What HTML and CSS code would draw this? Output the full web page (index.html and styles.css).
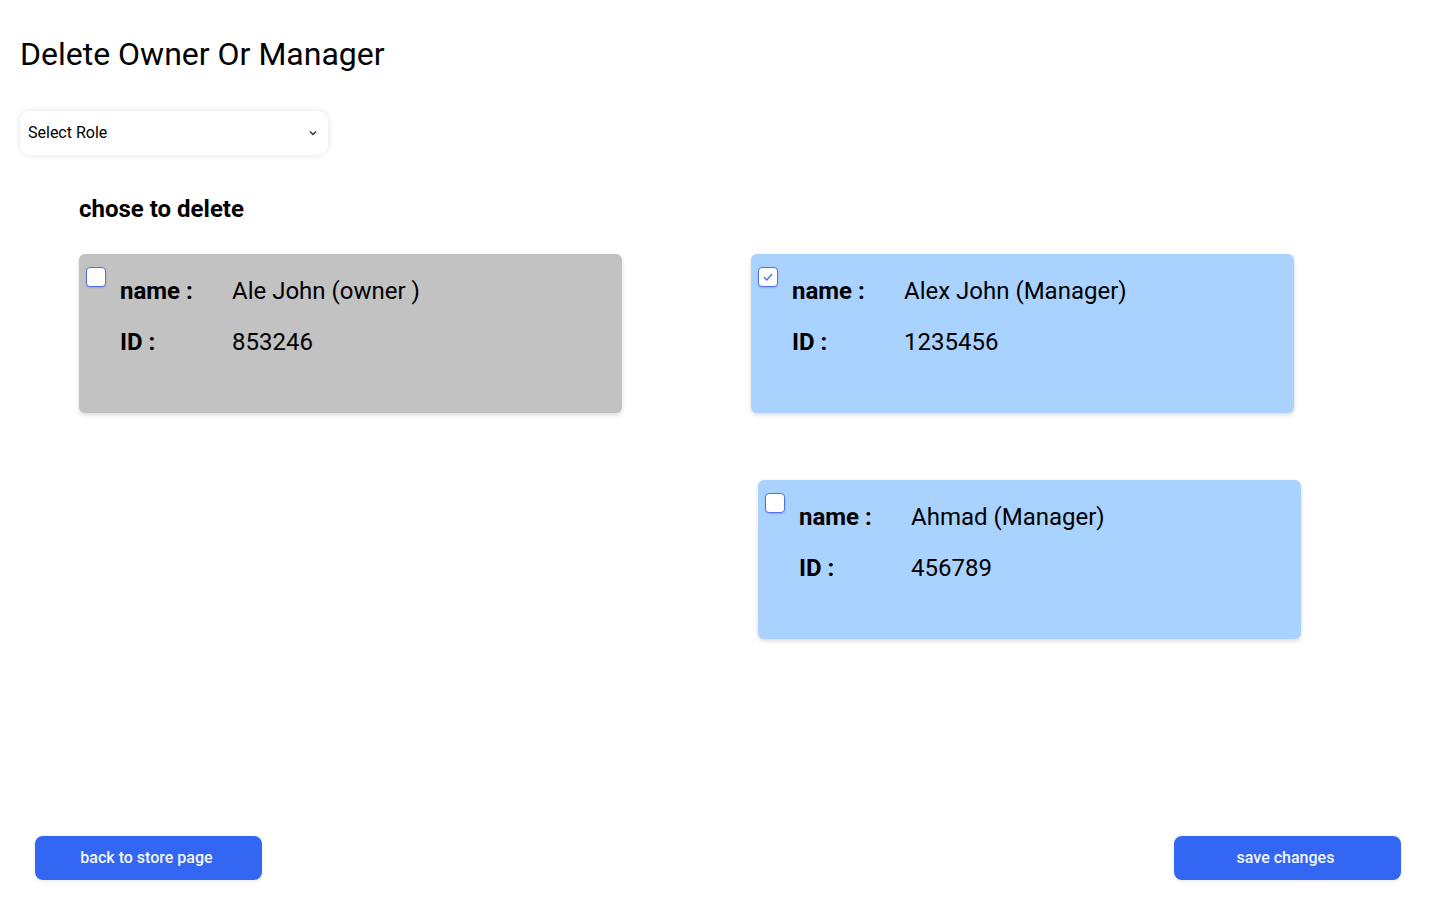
FILE: index.html
```html
<!DOCTYPE html>
<html lang="en">
<head>
<meta charset="utf-8">
<title>Delete Owner Or Manager</title>
<link rel="stylesheet" href="styles.css">
</head>
<body>
<div class="page">
  <h1 class="title">Delete Owner Or Manager</h1>
  <div class="select">
    <span class="select-text">Select Role</span>
    <svg class="chevron" width="8" height="6" viewBox="0 0 8 6"><path d="M1 1.5 L4 4.5 L7 1.5" fill="none" stroke="#333" stroke-width="1.5"/></svg>
  </div>
  <section class="list">
    <h2 class="subtitle">chose to delete</h2>
    <div class="cards">
      <div class="card card-owner">
        <span class="checkbox"></span>
        <div class="info">
          <div class="row"><span class="label">name :</span><span class="value">Ale John (owner )</span></div>
          <div class="row"><span class="label">ID :</span><span class="value">853246</span></div>
        </div>
      </div>
      <div class="card card-manager">
        <span class="checkbox checked"><svg width="12" height="10" viewBox="0 0 12 10"><path d="M2 5.2 L4.8 8 L10 2" fill="none" stroke="#4f6ff0" stroke-width="1.4"/></svg></span>
        <div class="info">
          <div class="row"><span class="label">name :</span><span class="value">Alex John (Manager)</span></div>
          <div class="row"><span class="label">ID :</span><span class="value">1235456</span></div>
        </div>
      </div>
      <div class="card card-manager card-third">
        <span class="checkbox"></span>
        <div class="info">
          <div class="row"><span class="label">name :</span><span class="value">Ahmad (Manager)</span></div>
          <div class="row"><span class="label">ID :</span><span class="value">456789</span></div>
        </div>
      </div>
    </div>
  </section>
  <footer class="footer">
    <button class="btn">back to store page</button>
    <button class="btn">save changes</button>
  </footer>
</div>
</body>
</html>
```
FILE: styles.css
```css
* { box-sizing: border-box; }
html, body { margin: 0; padding: 0; background: #fff; }
body { font-family: Roboto, "Liberation Sans", sans-serif; color: #000; }
.page {
  height: 100vh;
  display: flex;
  flex-direction: column;
  padding: 0 39px 20px 20px;
}
.title {
  margin: 35px 0 0;
  font-size: 32px;
  line-height: 38px;
  font-weight: 400;
}
.select {
  margin-top: 38px;
  width: 308px;
  height: 44px;
  border-radius: 10px;
  box-shadow: 0 0 6px rgba(0,0,0,0.12);
  display: flex;
  align-items: center;
  justify-content: space-between;
  padding: 0 11px 2px 8px;
  font-size: 16px;
}
.chevron { margin-top: 1px; }
.list { padding-left: 59px; }
.subtitle {
  margin: 40px 0 0;
  font-size: 24px;
  line-height: 28px;
  font-weight: 700;
}
.cards {
  margin-top: 31px;
  display: grid;
  grid-template-columns: 543px 543px;
  column-gap: 129px;
  row-gap: 67px;
}
.card {
  width: 543px;
  height: 159px;
  border-radius: 6px;
  box-shadow: 0 2px 4px rgba(0,0,0,0.15);
  display: flex;
  align-items: flex-start;
  padding: 13px 7px;
}
.card-owner { background: #c2c2c2; }
.card-manager { background: #aad2fe; }
.card-third { grid-column: 2; margin-left: 7px; }
.checkbox {
  flex: none;
  width: 20px;
  height: 20px;
  background: #fff;
  border: 1px solid #4f6ff0;
  border-radius: 4px;
  box-shadow: 0 1px 2px rgba(0,0,0,0.15);
  display: flex;
  align-items: center;
  justify-content: center;
}
.info {
  margin: 10px 0 0 14px;
  display: flex;
  flex-direction: column;
  gap: 23px;
}
.row {
  display: flex;
  font-size: 24px;
  line-height: 28px;
}
.label { width: 112px; font-weight: 700; }
.value { font-weight: 400; }
.footer {
  margin-top: auto;
  display: flex;
  justify-content: space-between;
  padding-left: 15px;
}
.btn {
  width: 227px;
  height: 44px;
  border: none;
  border-radius: 8px;
  background: #3366f2;
  color: #f4f6ff;
  font-family: Roboto, "Liberation Sans", sans-serif;
  font-size: 16px;
  font-weight: 500;
  padding: 0 4px 2px 0;
  box-shadow: 0 1px 4px rgba(0,0,0,0.1);
}
```
